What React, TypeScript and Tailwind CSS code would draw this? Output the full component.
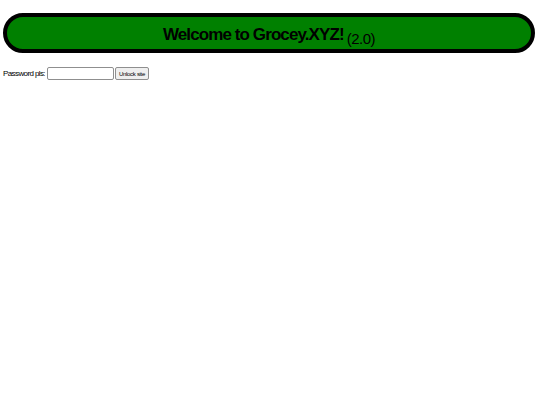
export default function App() {
  return (
    <div className="min-h-screen bg-white font-['Liberation_Sans',sans-serif] text-black">
      <div className="pt-[13px] pl-[3px] pr-[5px]">
        <h1 className="flex h-[40px] items-center justify-center rounded-full border-4 border-black bg-[#008000]">
          <span className="relative top-[1px] text-[17px] font-bold leading-none tracking-[-0.9px]">Welcome to Grocey.XYZ!</span>
          <span className="relative top-[5px] ml-[3px] text-[15px] leading-none tracking-[-0.5px]">(2.0)</span>
        </h1>
      </div>
      <div className="mt-[14px] flex items-center pl-[3px] text-[8px]">
        <span className="w-[42px] whitespace-nowrap tracking-[-0.6px]">Password pls:</span>
        <input type="password" className="ml-[2px] h-[13px] w-[67px] rounded-[2px] border border-[#8f8f8f] bg-white" />
        <button className="ml-[1px] h-[13px] w-[34px] whitespace-nowrap rounded-[2px] border border-[#8f8f8f] bg-[#efefef] p-0 text-[6px] leading-none tracking-[-0.3px]">
          Unlock site
        </button>
      </div>
    </div>
  );
}
